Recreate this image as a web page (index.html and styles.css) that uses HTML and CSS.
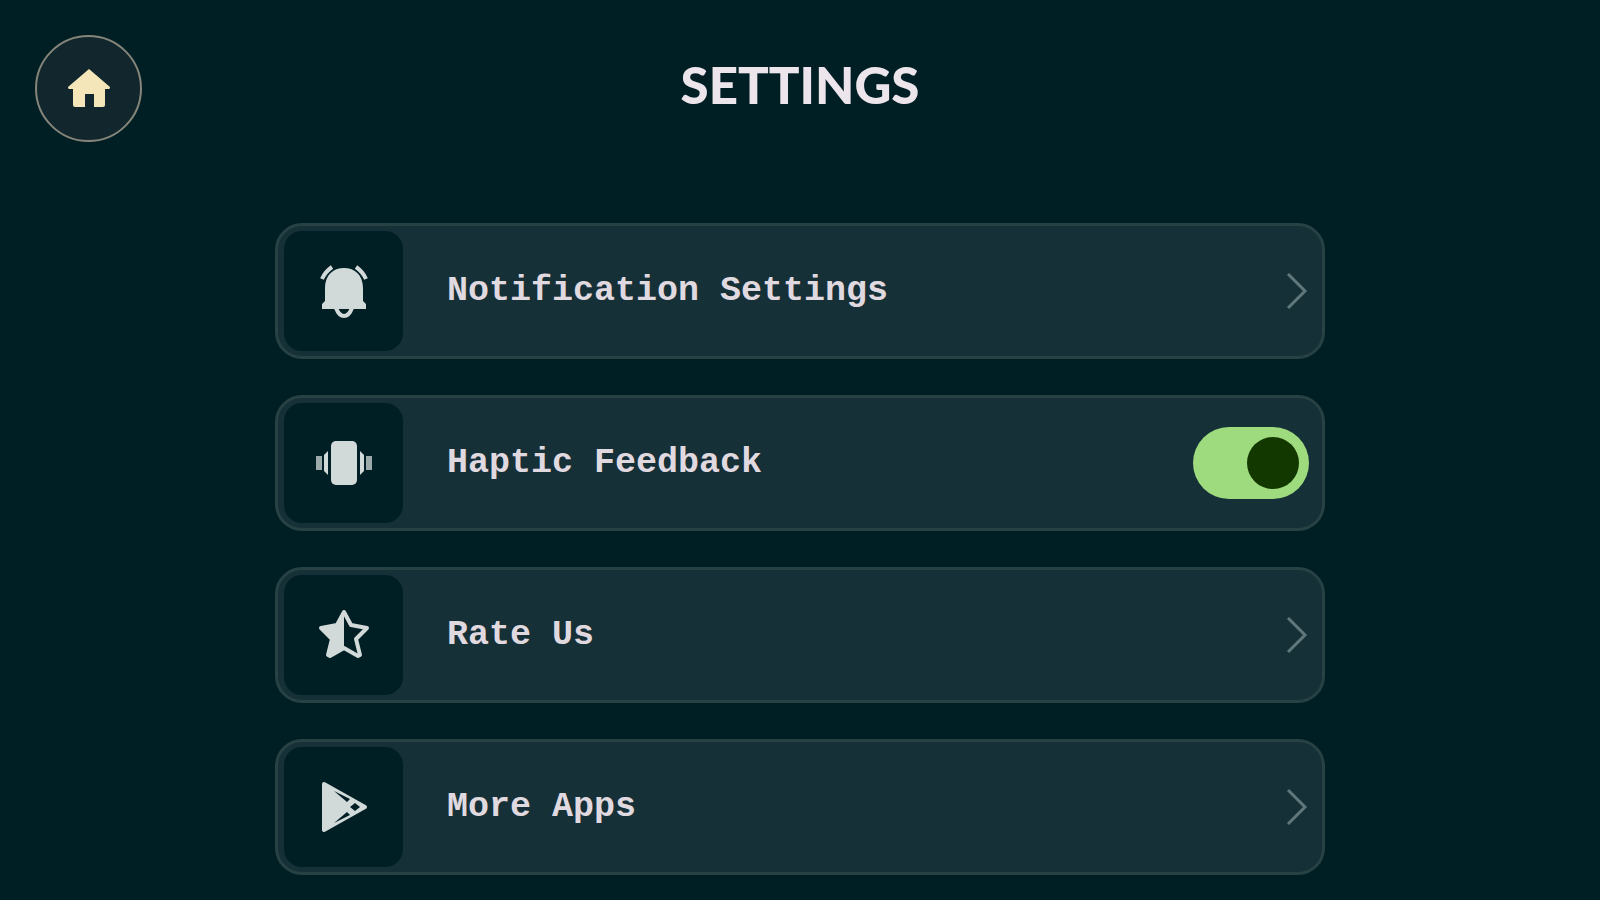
FILE: index.html
```html
<!DOCTYPE html>
<html lang="en">
<head>
  <meta charset="UTF-8">
  <meta name="viewport" content="width=device-width, initial-scale=1.0">
  <title>Settings</title>
  <link rel="stylesheet" href="styles.css">
</head>
<body>

  <header class="header">
    <a class="home" href="#" aria-label="Home">
      <svg viewBox="0 0 42 40" width="42" height="40">
        <path d="M21 0 L42 18 Q42 20 41 20 H37 V36 Q37 38 35 38 H26 V25 H17 V38 H7 Q5 38 5 36 V20 H1 Q0 20 0 18 Z" fill="#f5e6ba"/>
      </svg>
    </a>
    <h1>SETTINGS</h1>
  </header>

  <main class="settings">
    <a class="card" href="#">
      <span class="tile">
        <!-- Bell -->
        <svg class="icon" viewBox="0 0 60 60">
          <path d="M11 40 V27 C11 14 19 7 30 7 C41 7 49 14 49 27 V40 L52 43 V48 H8 V43 Z"/>
          <path class="line" d="M8 18 Q11 11 18 6 M42 6 Q49 11 52 18"/>
          <path class="line" d="M22 47 Q25 55 30 55 Q35 55 38 47"/>
        </svg>
      </span>
      <span class="label">Notification Settings</span>
      <svg class="chevron" viewBox="0 0 24 40"><path d="M3 3 L20 20 L3 37"/></svg>
    </a>

    <div class="card">
      <span class="tile">
        <!-- Vibrating phone -->
        <svg class="icon" viewBox="0 0 60 60">
          <rect x="17" y="8" width="26" height="44" rx="5"/>
          <path d="M10 22 L14 18 V42 L10 38 Z M50 22 L46 18 V42 L50 38 Z"/>
          <path d="M2 23 H8 V37 H2 Z M58 23 H52 V37 H58 Z" opacity="0.75"/>
        </svg>
      </span>
      <label class="label" for="haptic">Haptic Feedback</label>
      <input class="toggle" type="checkbox" id="haptic" checked>
    </div>

    <a class="card" href="#">
      <span class="tile">
        <!-- Half star -->
        <svg class="icon" viewBox="0 0 60 60">
          <path class="outline" d="M30 7 L37 20 L53 23 L42 34 L46 50 L44 51 L30 43 L16 51 L14 50 L18 34 L7 23 L23 20 Z"/>
          <path d="M30 6 V43 L15 51 L18 34 L7 23 L23 20 Z"/>
        </svg>
      </span>
      <span class="label">Rate Us</span>
      <svg class="chevron" viewBox="0 0 24 40"><path d="M3 3 L20 20 L3 37"/></svg>
    </a>

    <a class="card" href="#">
      <span class="tile">
        <!-- Play store -->
        <svg class="icon" viewBox="0 0 60 60">
          <path class="play" d="M10 7 L51 30 L10 53 Z"/>
          <path class="cut" d="M20 14 L36 22 L33 25 Z M20 46 L36 38 L33 35 Z M36 30 L41 26 L46 30 L41 34 Z"/>
        </svg>
      </span>
      <span class="label">More Apps</span>
      <svg class="chevron" viewBox="0 0 24 40"><path d="M3 3 L20 20 L3 37"/></svg>
    </a>
  </main>

</body>
</html>
```

FILE: styles.css
```css
* {
  box-sizing: border-box;
}

body {
  margin: 0;
  background: #001f24;
  color: #e0dae0;
  font-family: "Liberation Mono", monospace;
}

.header {
  display: grid;
  grid-template-columns: 1fr auto 1fr;
  align-items: center;
  padding: 35px 35px 0;
}

.home {
  display: flex;
  align-items: center;
  justify-content: center;
  width: 107px;
  height: 107px;
  border: 2px solid #85857a;
  border-radius: 50%;
  background: #11272d;
}

h1 {
  margin: 0;
  padding-bottom: 8px;
  font-family: Lato, sans-serif;
  font-size: 51px;
  font-weight: 900;
  line-height: 60px;
  color: #ece5eb;
}

.settings {
  display: flex;
  flex-direction: column;
  gap: 36px;
  max-width: 1098px;
  margin: 0 auto;
  padding: 81px 24px 24px;
}

.card {
  display: flex;
  align-items: center;
  padding: 5px 13px 5px 6px;
  border: 3px solid #274144;
  border-radius: 27px;
  background: #153036;
  color: inherit;
  text-decoration: none;
}

.tile {
  display: flex;
  align-items: center;
  justify-content: center;
  width: 119px;
  height: 120px;
  border-radius: 18px;
  background: #001f24;
}

.icon {
  width: 60px;
  height: 60px;
  fill: #d1d9d9;
}

.icon .line,
.icon .outline,
.icon .play {
  stroke: #d1d9d9;
  stroke-width: 4;
  stroke-linejoin: round;
}

.icon .line,
.icon .outline {
  fill: none;
}

.icon .cut {
  fill: #001f24;
}

.label {
  flex: 1;
  margin-left: 44px;
  font-size: 35px;
  font-weight: 700;
  line-height: 44px;
}

.chevron {
  width: 24px;
  height: 40px;
  fill: none;
  stroke: #60777b;
  stroke-width: 3;
}

.toggle {
  appearance: none;
  display: flex;
  align-items: center;
  width: 116px;
  height: 72px;
  margin: 0;
  padding: 0 10px;
  border-radius: 36px;
  background: #9eda7e;
  cursor: pointer;
}

.toggle::before {
  content: "";
  width: 52px;
  height: 52px;
  border-radius: 50%;
  background: #123800;
}

.toggle:checked {
  justify-content: flex-end;
}
```
